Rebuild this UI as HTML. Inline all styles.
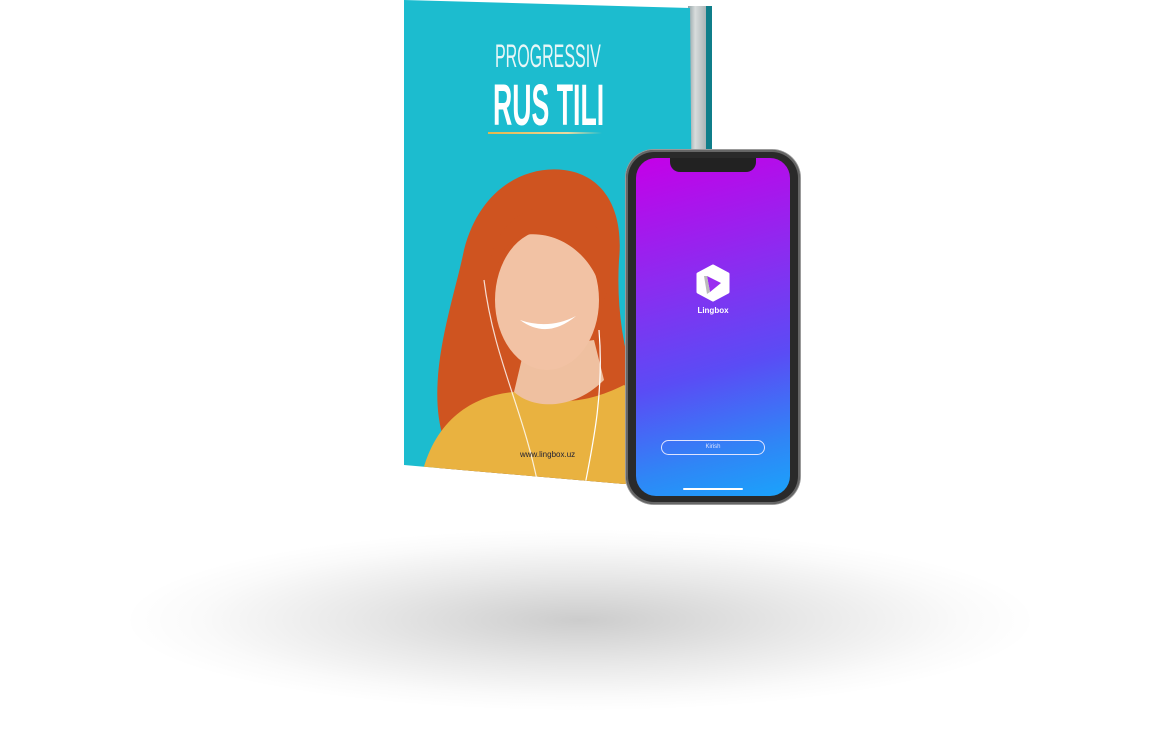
<!DOCTYPE html>
<html><head><style>
body{margin:0;width:1162px;height:744px;background:#fff;position:relative;overflow:hidden;font-family:"Liberation Sans",sans-serif}
.shadow{position:absolute;left:130px;top:530px;width:900px;height:180px;border-radius:50%;background:radial-gradient(ellipse at center,rgba(0,0,0,.2) 0%,rgba(0,0,0,.09) 35%,rgba(0,0,0,.02) 60%,rgba(0,0,0,0) 72%)}
.book{position:absolute;left:404px;top:0;width:290px;height:490px;background:#1cbccf;clip-path:polygon(0 0,286px 8px,290px 470px,220px 484px,0 465px);overflow:hidden}
.pages{position:absolute;left:688px;top:6px;width:18px;height:440px;background:linear-gradient(90deg,#8ea0a4,#d8dcdc 40%,#aab4b6);border-right:6px solid #0f7e8a}
.t1{position:absolute;left:91px;top:38px;color:#e8f6f7;font-size:32px;white-space:nowrap;transform:scaleX(.5);transform-origin:0 0}
.t2{position:absolute;left:89px;top:72px;color:#fff;font-size:58px;font-weight:bold;white-space:nowrap;transform:scaleX(.46);transform-origin:0 0}
.line{position:absolute;left:84px;top:132px;width:114px;height:2px;background:linear-gradient(90deg,#e5b64a,#e9d9a0 70%,transparent)}
.url{position:absolute;left:116px;top:450px;font-size:8px;color:#223}
.phone{position:absolute;left:626px;top:150px;width:174px;height:354px;border-radius:28px;background:#2a2a2a;box-shadow:0 0 0 1px #999,inset 0 0 0 2px #666}
.screen{position:absolute;left:10px;top:8px;width:154px;height:338px;border-radius:20px;background:linear-gradient(165deg,#c500e8 0%,#8b2cf0 35%,#5a4cf5 62%,#2f86f6 85%,#1aa3fb 100%);overflow:hidden}
.notch{position:absolute;left:34px;top:0;width:86px;height:14px;background:#222;border-radius:0 0 10px 10px}
.logo{position:absolute;left:59px;top:106px}
.lb{position:absolute;left:0;width:154px;top:148px;text-align:center;color:#fff;font-weight:bold;font-size:8px}
.btn{position:absolute;left:25px;top:282px;width:102px;height:13px;border:1px solid #dfe4ff;border-radius:8px;color:#dfe4ff;font-size:6px;text-align:center;line-height:13px}
.home{position:absolute;left:47px;top:330px;width:60px;height:2px;background:#fff;border-radius:1px}
</style></head><body>
<div class="shadow"></div>
<div class="pages"></div>
<div class="book">
 <div class="t1">PROGRESSIV</div>
 <div class="t2">RUS TILI</div>
 <div class="line"></div>
 <svg style="position:absolute;left:0;top:160px" width="290" height="330">
  <path d="M40 280 C20 220 50 140 60 90 C75 30 120 5 160 10 C200 15 220 50 215 100 C212 150 220 200 240 250 L250 330 L30 330Z" fill="#cf5420"/>
  <path d="M15 330 C25 260 70 235 110 232 C150 245 180 245 220 225 C250 240 270 270 280 330Z" fill="#e9b240"/>
  <path d="M110 232 C130 250 170 250 200 220 L190 180 L120 190Z" fill="#efc0a0"/>
  <ellipse cx="143" cy="140" rx="52" ry="70" fill="#f2c2a4"/>
  <path d="M85 110 C90 50 150 25 195 70 C200 100 210 120 200 140 C190 90 150 70 120 75 C100 80 92 100 90 130Z" fill="#cf5420"/>
  <path d="M116 160 Q143 180 172 156 Q145 170 116 160Z" fill="#fff"/>
  <path d="M195 170 C200 230 190 280 180 330" stroke="#fff" stroke-width="1.2" fill="none"/>
  <path d="M80 120 C90 200 120 250 135 330" stroke="#fff" stroke-width="1.2" fill="none" opacity=".8"/>
 </svg>
 <div class="url">www.lingbox.uz</div>
</div>
<div class="phone"><div class="screen">
 <div class="notch"></div>
 <svg class="logo" width="36" height="38" viewBox="0 0 36 38"><path d="M18 2 L33 10 L33 28 L18 36 L3 28 L3 10Z" fill="#fff" stroke="#fff" stroke-width="3" stroke-linejoin="round"/><path d="M12 12 L26 19 L15 28Z" fill="#9a2cf0"/><path d="M9 12 L12 12 L15 28 L12 30Z" fill="#bbb"/></svg>
 <div class="lb">Lingbox</div>
 <div class="btn">Kirish</div>
 <div class="home"></div>
</div></div>
</body></html>
